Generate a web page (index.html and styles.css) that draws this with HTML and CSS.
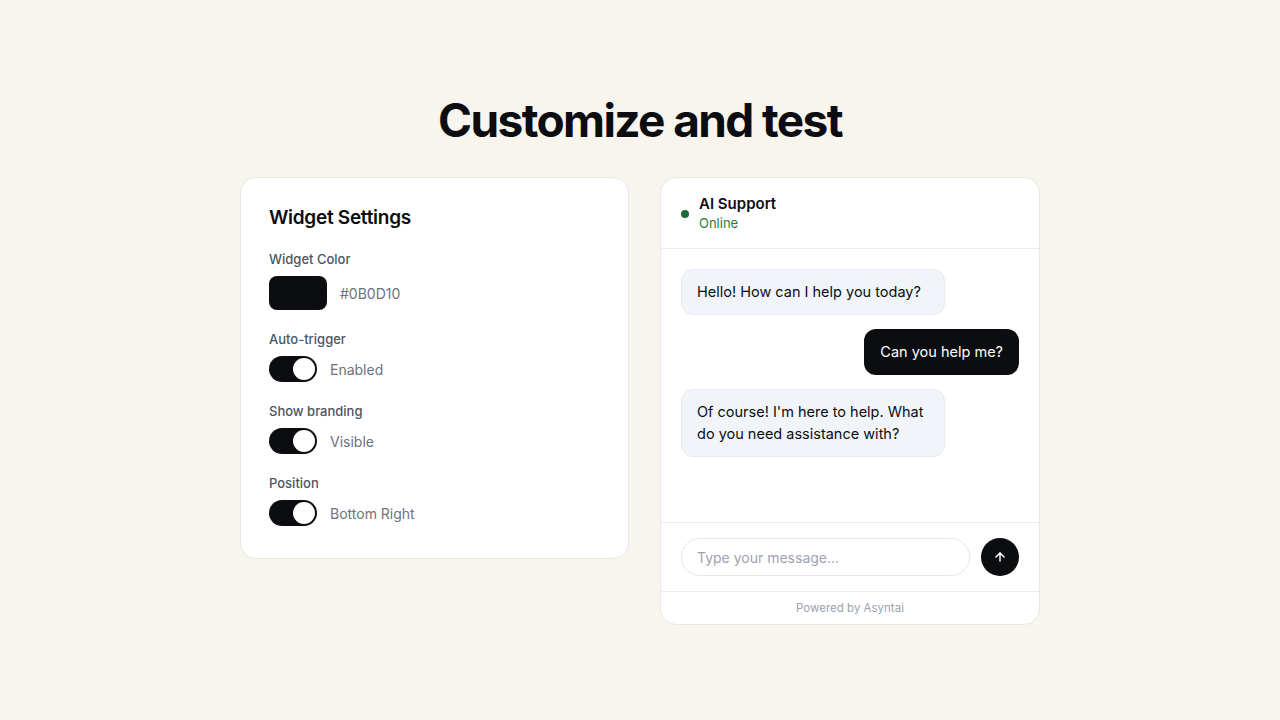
FILE: index.html
```html
<!DOCTYPE html>
<html>
<head>
  <title>Customize and test</title>
  <meta charset="UTF-8">
  <link rel="stylesheet" href="styles.css">
</head>
<body>
  <h1 class="heading">Customize and test</h1>
  <div class="panels">
    <div class="card settings">
      <div class="settings-title">Widget Settings</div>
      <div class="field">
        <div class="field-label">Widget Color</div>
        <div class="field-row">
          <div class="swatch"></div>
          <span class="field-value">#0B0D10</span>
        </div>
      </div>
      <div class="field">
        <div class="field-label">Auto-trigger</div>
        <div class="field-row">
          <div class="toggle"><div class="knob"></div></div>
          <span class="field-value">Enabled</span>
        </div>
      </div>
      <div class="field">
        <div class="field-label">Show branding</div>
        <div class="field-row">
          <div class="toggle"><div class="knob"></div></div>
          <span class="field-value">Visible</span>
        </div>
      </div>
      <div class="field">
        <div class="field-label">Position</div>
        <div class="field-row">
          <div class="toggle"><div class="knob"></div></div>
          <span class="field-value">Bottom Right</span>
        </div>
      </div>
    </div>

    <div class="card chat">
      <div class="chat-header">
        <span class="status-dot"></span>
        <div>
          <div class="agent-name">AI Support</div>
          <div class="agent-status">Online</div>
        </div>
      </div>
      <div class="messages">
        <div class="bubble bot">Hello! How can I help you today?</div>
        <div class="bubble user">Can you help me?</div>
        <div class="bubble bot">Of course! I'm here to help. What do you need assistance with?</div>
      </div>
      <div class="composer">
        <input type="text" class="message-input" placeholder="Type your message...">
        <button class="send-btn">
          <svg width="14" height="14" viewBox="0 0 24 24" fill="none" stroke="#ffffff" stroke-width="2.5" stroke-linecap="round" stroke-linejoin="round">
            <path d="M12 19V5"/>
            <path d="M5 12l7-7 7 7"/>
          </svg>
        </button>
      </div>
      <div class="powered">Powered by Asyntai</div>
    </div>
  </div>
</body>
</html>
```

FILE: styles.css
```css
* {
  box-sizing: border-box;
}
body {
  font-family: Inter, 'Noto Sans', sans-serif;
  margin: 0;
  padding: 94px 0 0;
  background-color: #f8f5ef;
  color: #0b0d10;
}
.heading {
  margin: 0 0 30px;
  font-size: 46px;
  line-height: 53px;
  font-weight: 700;
  letter-spacing: -0.035em;
  text-align: center;
}
.panels {
  width: 800px;
  margin: 0 auto;
  display: flex;
  align-items: flex-start;
  gap: 31px;
}
.card {
  background-color: #ffffff;
  border: 1px solid #ebe7de;
  border-radius: 16px;
}
.settings {
  flex: 0 0 389px;
  padding: 26px 28px 32px;
  display: flex;
  flex-direction: column;
  gap: 20px;
}
.settings-title {
  font-size: 19px;
  line-height: 28px;
  font-weight: 600;
  letter-spacing: -0.015em;
  margin-bottom: -2px;
}
.field-label {
  font-size: 13px;
  line-height: 18px;
  font-weight: 500;
  color: #4b5563;
  margin-bottom: 8px;
}
.field-row {
  display: flex;
  align-items: center;
  gap: 13px;
}
.swatch {
  width: 58px;
  height: 34px;
  border-radius: 8px;
  background-color: #0b0d10;
}
.field-value {
  font-size: 14px;
  color: #6b7280;
}
.toggle {
  width: 48px;
  height: 26px;
  border-radius: 13px;
  background-color: #0b0d10;
  padding: 2px;
  display: flex;
  justify-content: flex-end;
}
.knob {
  width: 22px;
  height: 22px;
  border-radius: 50%;
  background-color: #ffffff;
}
.chat {
  flex: 0 0 380px;
  height: 448px;
  display: flex;
  flex-direction: column;
  overflow: hidden;
}
.chat-header {
  display: flex;
  align-items: center;
  gap: 10px;
  padding: 16px 20px;
  border-bottom: 1px solid #ececec;
}
.status-dot {
  width: 8px;
  height: 8px;
  border-radius: 50%;
  background-color: #1f6b3a;
  margin-top: 2px;
}
.agent-name {
  font-size: 15px;
  line-height: 20px;
  font-weight: 600;
}
.agent-status {
  font-size: 13px;
  line-height: 18px;
  color: #2d7a46;
}
.messages {
  flex: 1;
  padding: 20px;
  display: flex;
  flex-direction: column;
  align-items: flex-start;
  gap: 14px;
}
.bubble {
  max-width: 80%;
  padding: 11px 15px;
  border-radius: 12px;
  font-size: 14.5px;
  line-height: 22px;
  border: 1px solid transparent;
}
.bubble.bot {
  width: 78%;
  background-color: #f1f5f9;
  border-color: #e5eaf0;
  color: #0b0d10;
}
.bubble.user {
  align-self: flex-end;
  background-color: #0b0d10;
  color: #ffffff;
}
.composer {
  display: flex;
  align-items: center;
  gap: 11px;
  padding: 15px 20px;
  border-top: 1px solid #ececec;
  border-bottom: 1px solid #ececec;
}
.message-input {
  flex: 1;
  height: 38px;
  border: 1px solid #e5e7eb;
  border-radius: 19px;
  padding: 0 15px;
  font-family: inherit;
  font-size: 14px;
  color: #0b0d10;
  outline: none;
}
.message-input::placeholder {
  color: #9ca3af;
}
.send-btn {
  flex: 0 0 38px;
  width: 38px;
  height: 38px;
  border: none;
  border-radius: 50%;
  background-color: #0b0d10;
  display: flex;
  align-items: center;
  justify-content: center;
  padding: 0;
  cursor: pointer;
}
.powered {
  height: 32px;
  display: flex;
  align-items: center;
  justify-content: center;
  font-size: 11.5px;
  color: #9ca3af;
}
```
